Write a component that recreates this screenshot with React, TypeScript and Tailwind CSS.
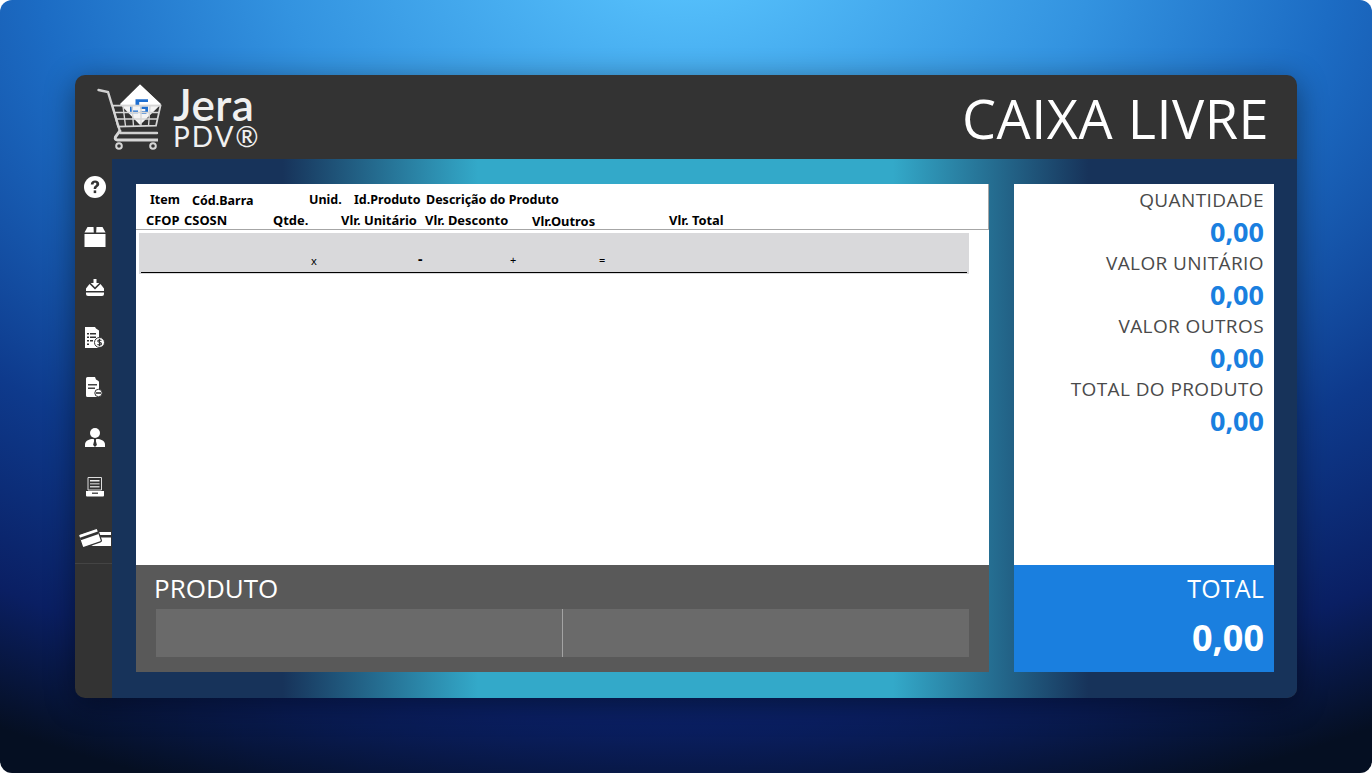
import React from "react";

const headerTop = [
  { label: "Item", className: "ml-[14px] w-[42px]" },
  { label: "Cód.Barra", className: "w-[117px] pt-px" },
  { label: "Unid.", className: "w-[45px]" },
  { label: "Id.Produto", className: "w-[72px]" },
  { label: "Descrição do Produto", className: "" },
];

const headerBottom = [
  { label: "CFOP", className: "ml-[10px] w-[38px]" },
  { label: "CSOSN", className: "w-[89px]" },
  { label: "Qtde.", className: "w-[68px]" },
  { label: "Vlr. Unitário", className: "w-[84px]" },
  { label: "Vlr. Desconto", className: "w-[107px]" },
  { label: "Vlr.Outros", className: "w-[137px] pt-px" },
  { label: "Vlr. Total", className: "" },
];

const values = [
  { label: "QUANTIDADE" },
  { label: "VALOR UNITÁRIO" },
  { label: "VALOR OUTROS" },
  { label: "TOTAL DO PRODUTO" },
];

const HelpIcon = () => (
  <svg width="22" height="22" viewBox="0 0 22 22">
    <circle cx="11" cy="11" r="11" fill="#fff" />
    <path d="M6.800 8.400c0-2.500 1.900-3.900 4.300-3.900s4.100 1.400 4.100 3.400c0 2.900-3 2.800-3 5H9.700c0-3.200 2.700-3.300 2.700-4.900 0-.8-.6-1.300-1.400-1.300-.9 0-1.400.7-1.500 1.700z" fill="#333" />
    <rect x="9.700" y="14.400" width="2.500" height="2.700" fill="#333" />
  </svg>
);

const BoxIcon = () => (
  <svg width="22" height="20" viewBox="0 0 22 20" fill="#fff">
    <path d="M3.500 0H9.500L9.800 5.500H0.500z" />
    <path d="M12.500 0H18.500L21.500 5.500H12.200z" />
    <rect x="0.500" y="7" width="21" height="13" />
  </svg>
);

const TrayIcon = () => (
  <svg width="20" height="17" viewBox="0 0 20 17" fill="#fff">
    <path d="M8.500 0h3v4h2.800L10 8.200 5.700 4h2.800z" />
    <path d="M4.500 5l5.500 5.400L15.500 5 19 9.500v2.500H1V9.500z" />
    <path d="M1 13.500h18V15a2 2 0 0 1-2 2H3a2 2 0 0 1-2-2z" />
  </svg>
);

const BillIcon = () => (
  <svg width="20" height="21" viewBox="0 0 20 21">
    <path d="M0 0h10l1 1.500 3 2V21H0z" fill="#fff" />
    <g fill="#333">
      <rect x="2" y="6" width="2" height="1.500" />
      <rect x="5" y="6" width="6" height="1.500" />
      <rect x="2" y="9.500" width="2" height="1.500" />
      <rect x="5" y="9.500" width="6" height="1.500" />
      <rect x="2" y="13" width="2" height="1.500" />
      <rect x="5" y="13" width="3" height="1.500" />
      <rect x="2" y="16.500" width="2" height="1.500" />
    </g>
    <circle cx="14.500" cy="15.500" r="5" fill="#fff" stroke="#333" strokeWidth="1" />
    <path d="M16.500 13.500c-.5-.7-3.700-1-3.800.6-.1 1.700 3.900.9 3.800 2.800-.1 1.500-3.400 1.300-4 .4M14.500 11.800v7.400" fill="none" stroke="#333" strokeWidth="1.100" />
  </svg>
);

const DocMinusIcon = () => (
  <svg width="17" height="20" viewBox="0 0 17 20">
    <path d="M1.500 0H9l1 2.500 2.500 1.500.5 1v15H1.500A1.500 1.500 0 0 1 0 18.500V1.500A1.500 1.500 0 0 1 1.500 0z" fill="#fff" />
    <rect x="2" y="7" width="9" height="1.500" fill="#444" />
    <rect x="2" y="10.500" width="7" height="1.500" fill="#444" />
    <circle cx="12.500" cy="16" r="3.700" fill="#fff" stroke="#333" strokeWidth="1" />
    <rect x="10" y="15.200" width="5" height="1.600" fill="#333" />
  </svg>
);

const UserIcon = () => (
  <svg width="20" height="19" viewBox="0 0 20 19">
    <circle cx="10" cy="5" r="5" fill="#fff" />
    <path d="M0 19v-2.500c0-3 3-5 6.500-5.500h7c3.500.5 6.500 2.500 6.500 5.500V19z" fill="#fff" />
    <path d="M8.800 11h2.400l-.3 2 1 4-1.900 2-1.900-2 1-4z" fill="#333" />
  </svg>
);

const PrinterIcon = () => (
  <svg width="20" height="20" viewBox="0 0 20 20">
    <path d="M3 .5h13.500V13H3z" fill="none" stroke="#ddd" />
    <rect x="5" y="3" width="9.500" height="1.500" fill="#eee" />
    <rect x="5" y="6" width="9.500" height="1.500" fill="#aaa" />
    <rect x="5" y="9" width="9.500" height="1.500" fill="#ccc" />
    <path d="M1 14h18v4.500a1 1 0 0 1-1 1H2a1 1 0 0 1-1-1z" fill="#fff" />
    <rect x="7" y="15.500" width="6" height="1.500" fill="#555" />
  </svg>
);

const CardsIcon = () => (
  <svg width="33" height="20" viewBox="0 0 33 20" className="ml-[-1px]">
    <path d="M20 5h13v14H15a2 2 0 0 1-2-2z" fill="#fff" />
    <rect x="18" y="8" width="15" height="2.500" fill="#333" />
    <g transform="rotate(-19 12 11)">
      <rect x="2" y="4" width="20" height="14" rx="1.500" fill="#fff" stroke="#333" strokeWidth="1.200" />
      <rect x="2.500" y="7.500" width="19" height="2.500" fill="#333" />
    </g>
  </svg>
);

const CartLogo = () => (
  <svg width="66" height="68" viewBox="0 0 66 68">
    <path d="M43 1.500 64 21.300 43 42 23 21.300z" fill="#f4f4f4" />
    <path d="M43 1.500 64 21.300H23z" fill="#ffffff" />
    <path d="M38.500 22v-5.800H51V19h-8.800v3" fill="#1f6fd0" />
    <path d="M33 23.500h2.700v4h5.300v2.700h-8zM43.500 23.500H51V29l-2 1.800h-5.500v-2.500h4.800V26h-4.800z" fill="#1f6fd0" />
    <path d="M1.500 7 11 9 23.500 50H60" fill="none" stroke="#d0d0d0" strokeWidth="2.400" strokeLinecap="round" />
    <path d="M15.500 22.700H63.500L59 42.700 21 43.700z" fill="none" stroke="#d6d6d6" strokeWidth="1.800" />
    <path d="M18 29.500H62M19.500 36H60.500M26 23l2.500 20M35 23l1.500 20M44 23v20M53 23l-1.500 20" fill="none" stroke="#d6d6d6" strokeWidth="1.400" />
    <path d="M23.500 47 18.500 54q-1 3 2 3H61" fill="none" stroke="#d6d6d6" strokeWidth="3" />
    <circle cx="22" cy="63" r="2.800" fill="none" stroke="#d6d6d6" strokeWidth="2" />
    <circle cx="56" cy="63" r="2.800" fill="none" stroke="#d6d6d6" strokeWidth="2" />
  </svg>
);

const sideIcons = [
  { key: "help", node: <HelpIcon /> },
  { key: "box", node: <BoxIcon /> },
  { key: "tray", node: <TrayIcon /> },
  { key: "bill", node: <BillIcon /> },
  { key: "doc", node: <DocMinusIcon /> },
  { key: "user", node: <UserIcon /> },
  { key: "printer", node: <PrinterIcon /> },
  { key: "cards", node: <CardsIcon /> },
];

const App = () => {
  return (
    <div className="w-[1372px] h-[773px] overflow-hidden bg-white font-['Open_Sans',sans-serif]">
      <div className="w-full h-full rounded-[12px] flex items-start pt-[75px] pl-[75px] bg-[radial-gradient(ellipse_1100px_700px_at_50%_-6%,#5ac6ff_0%,#3393e0_37%,#1c6cc4_59%,#0e3a8c_87%,#0a1f63_110%,#050f22_127%)]">
        <div className="w-[1222px] h-[623px] rounded-[10px] overflow-hidden flex flex-col bg-[#333333] shadow-[0_6px_30px_rgba(0,0,0,0.45)]">
          {/* Header */}
          <header className="h-[84px] shrink-0 flex items-center justify-between pl-[22px] pr-[28px]">
            <div className="flex items-start">
              <CartLogo />
              <div className="ml-[10px] mt-[3px] text-[#f0f0f0] font-['Lato',sans-serif]">
                <p className="text-[44px] leading-[36px] font-semibold tracking-[0.5px]">Jera</p>
                <p className="text-[28px] leading-[24px] tracking-[2px] mt-[2px]">PDV®</p>
              </div>
            </div>
            <p className="text-[54px] leading-none mt-[2px] text-white tracking-[0.5px]">CAIXA LIVRE</p>
          </header>

          <div className="flex flex-1 min-h-0">
            {/* Menu lateral */}
            <nav className="w-[37px] shrink-0 flex flex-col">
              {sideIcons.map((item) => (
                <div key={item.key} className="h-[50px] flex items-center justify-center pl-[2px] first:mt-[3px] overflow-hidden">
                  {item.node}
                </div>
              ))}
              <div className="mt-[1px] border-t border-[#444444]" />
            </nav>

            {/* Corps */}
            <main className="flex-1 flex gap-[25px] pl-[24px] pr-[23px] pt-[25px] pb-[26px] bg-[linear-gradient(90deg,#17335a_14.4%,#33a9c9_30.9%,#33a9c9_65.9%,#17335a_82.4%)]">
              <section className="w-[853px] flex flex-col">
                <div className="h-[381px] bg-white">
                  <div className="h-[46px] border-b border-r border-[#a6a6a6] text-[12.5px] leading-[16px] font-bold text-black font-['Noto_Sans',sans-serif]">
                    <div className="flex pt-[8px]">
                      {headerTop.map((col) => (
                        <span key={col.label} className={col.className}>{col.label}</span>
                      ))}
                    </div>
                    <div className="flex pt-[3px] text-[12.9px]">
                      {headerBottom.map((col) => (
                        <span key={col.label} className={col.className}>{col.label}</span>
                      ))}
                    </div>
                  </div>
                  <div className="mt-[3px] ml-[3px] w-[830px] h-[41px] bg-[#d9d9db] px-[2px]">
                    <div className="h-[40px] border-b border-black relative text-[11px] text-black font-['Noto_Sans',sans-serif]">
                      <span className="absolute left-[170px] top-[20px]">x</span>
                      <span className="absolute left-[277px] top-[15px] font-bold text-[14px]">-</span>
                      <span className="absolute left-[369px] top-[19px]">+</span>
                      <span className="absolute left-[458px] top-[19px]">=</span>
                    </div>
                  </div>
                </div>
                <div className="flex-1 bg-[#595959] pl-[19px] pr-[20px] pt-[8px]">
                  <p className="text-[26px] leading-[30px] font-medium text-white -ml-px">PRODUTO</p>
                  <div className="mt-[6px] ml-px h-[48px] flex bg-[#6a6a6a]">
                    <div className="w-[407px] border-r border-[#a3a3a3]" />
                  </div>
                </div>
              </section>

              <aside className="w-[260px] flex flex-col">
                <div className="h-[381px] bg-white pr-[10px] pt-[2px] text-right">
                  {values.map((item) => (
                    <div key={item.label} className="h-[63px]">
                      <p className="text-[19px] leading-[28px] tracking-[0.4px] text-[#4a4a4a]">{item.label}</p>
                      <p className="text-[27px] leading-[34px] mt-px -mb-px font-bold text-[#1a7fdf]">0,00</p>
                    </div>
                  ))}
                </div>
                <div className="flex-1 bg-[#1a7fdf] pr-[10px] pt-[7px] text-right text-white">
                  <p className="text-[25px] leading-[32px] font-medium tracking-[0.2px]">TOTAL</p>
                  <p className="text-[36px] leading-[44px] mt-[12px] font-bold">0,00</p>
                </div>
              </aside>
            </main>
          </div>
        </div>
      </div>
    </div>
  );
};

export default App;
